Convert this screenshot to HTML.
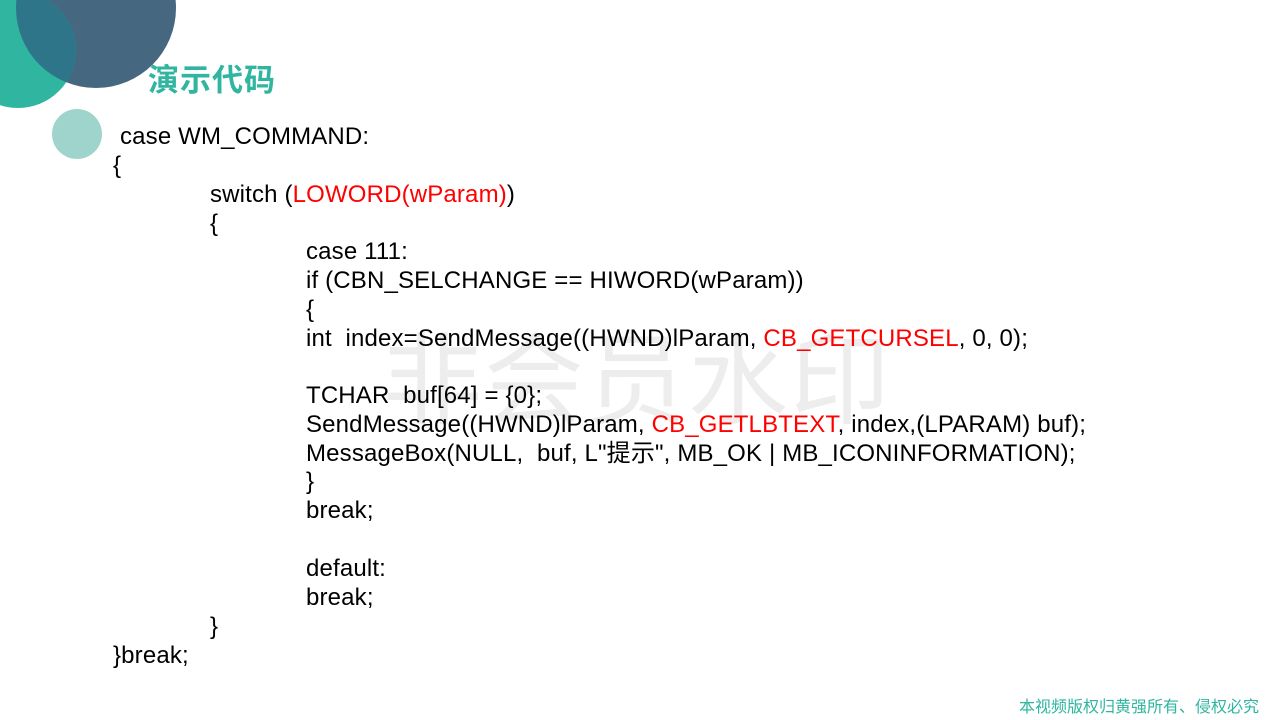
<!DOCTYPE html>
<html><head><meta charset="utf-8"><style>
html,body{margin:0;padding:0;}
body{width:1280px;height:720px;position:relative;overflow:hidden;background:#fff;font-family:"Liberation Sans","Noto Sans CJK SC",sans-serif;}
.c{position:absolute;border-radius:50%;}
.t{position:absolute;left:148px;top:55px;font-size:31px;font-weight:bold;color:#2fb5a0;font-family:"Noto Sans CJK SC",sans-serif;letter-spacing:1px;}
.wm{position:absolute;left:382px;top:300px;font-size:100px;color:#ededed;font-family:"Noto Sans CJK SC",sans-serif;letter-spacing:2px;}
.l{position:absolute;font-size:24px;color:#000;white-space:pre;line-height:28px;letter-spacing:0.16px;margin-top:2px;}
.r{color:#f00;}
.f{position:absolute;left:1019px;top:693px;font-size:16px;color:#2fb5a0;font-family:"Noto Sans CJK SC",sans-serif;}
</style></head><body>
<div class="c" style="left:16px;top:-72px;width:160px;height:160px;background:#45677f;"></div>
<div class="c" style="left:-40px;top:-8px;width:116px;height:116px;background:#2fb5a0;"></div>
<svg style="position:absolute;left:0;top:0" width="200" height="120"><defs><clipPath id="a"><circle cx="96" cy="8" r="80"/></clipPath></defs><circle cx="18" cy="50" r="58" fill="#2e7589" clip-path="url(#a)"/></svg>
<div class="c" style="left:52px;top:109px;width:50px;height:50px;background:#9fd4cc;"></div>
<div class="t">演示代码</div>
<div class="wm">非会员水印</div>
<div class="l" style="left:120px;top:121px">case WM_COMMAND:</div>
<div class="l" style="left:113px;top:150px">{</div>
<div class="l" style="left:210px;top:179px">switch (<span class="r">LOWORD(wParam)</span>)</div>
<div class="l" style="left:210px;top:208px">{</div>
<div class="l" style="left:306px;top:236px">case 111:</div>
<div class="l" style="left:306px;top:265px">if (CBN_SELCHANGE == HIWORD(wParam))</div>
<div class="l" style="left:306px;top:294px">{</div>
<div class="l" style="left:306px;top:323px">int  index=SendMessage((HWND)lParam, <span class="r">CB_GETCURSEL</span>, 0, 0);</div>
<div class="l" style="left:306px;top:380px">TCHAR  buf[64] = {0};</div>
<div class="l" style="left:306px;top:409px">SendMessage((HWND)lParam, <span class="r">CB_GETLBTEXT</span>, index,(LPARAM) buf);</div>
<div class="l" style="left:306px;top:438px">MessageBox(NULL,  buf, L"提示", MB_OK | MB_ICONINFORMATION);</div>
<div class="l" style="left:306px;top:466px">}</div>
<div class="l" style="left:306px;top:495px">break;</div>
<div class="l" style="left:306px;top:553px">default:</div>
<div class="l" style="left:306px;top:582px">break;</div>
<div class="l" style="left:210px;top:611px">}</div>
<div class="l" style="left:113px;top:640px">}break;</div>
<div class="f">本视频版权归黄强所有、侵权必究</div>
</body></html>
